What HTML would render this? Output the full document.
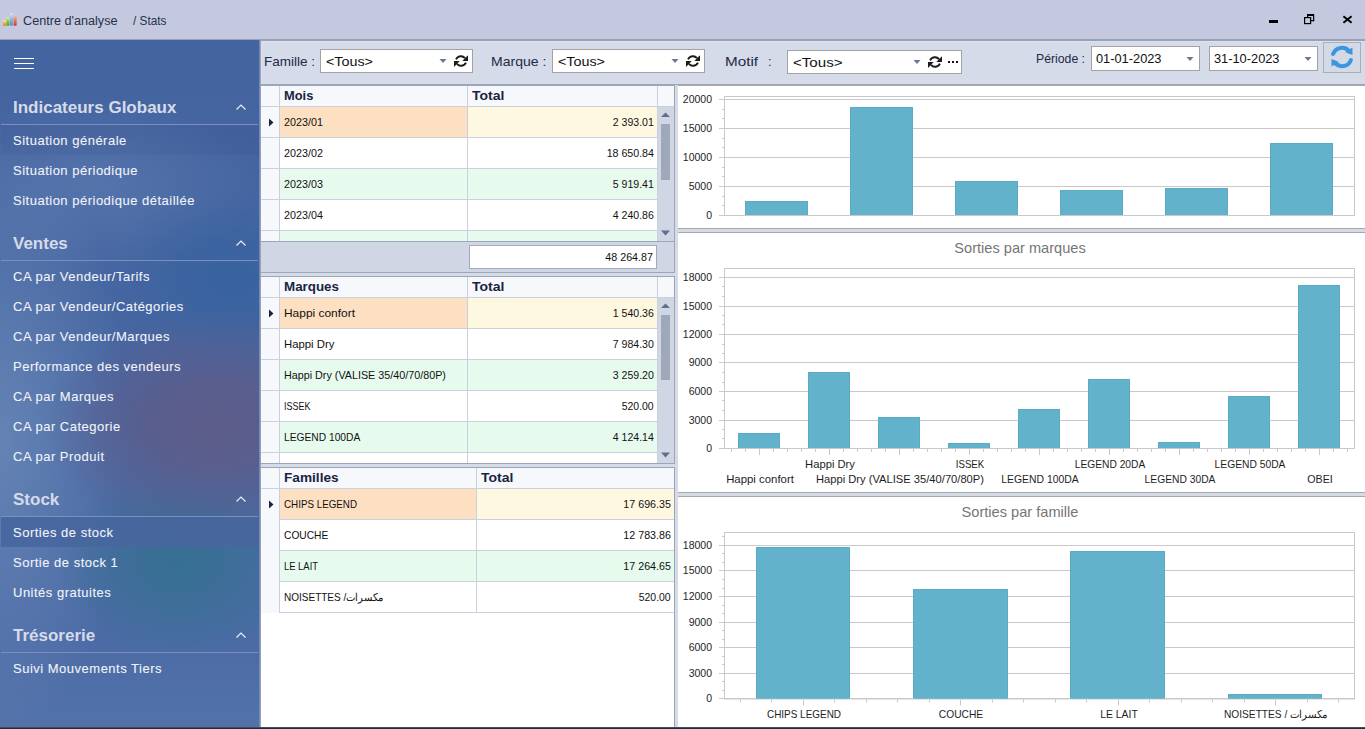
<!DOCTYPE html><html><head><meta charset="utf-8"><style>
html,body{margin:0;padding:0;width:1365px;height:729px;overflow:hidden;background:#fff;font-family:"Liberation Sans",sans-serif;position:relative;}
.t{position:absolute;white-space:pre;line-height:1;}
</style></head><body>
<div style="position:absolute;left:0px;top:0px;width:1365px;height:39px;background:#c4c9df"></div>
<div style="position:absolute;left:0px;top:39px;width:1365px;height:1px;background:#97a3b4"></div>
<div style="position:absolute;left:260px;top:40px;width:1105px;height:1px;background:#97a3b4"></div>
<svg style="position:absolute;left:0;top:0" width="20" height="30">
<defs>
<linearGradient id="go" x1="0" y1="0" x2="0" y2="1"><stop offset="0" stop-color="#fde9a8"/><stop offset="0.5" stop-color="#f4b04a"/><stop offset="1" stop-color="#e07a1e"/></linearGradient>
<linearGradient id="gg" x1="0" y1="0" x2="0" y2="1"><stop offset="0" stop-color="#d8f59a"/><stop offset="0.5" stop-color="#90c23a"/><stop offset="1" stop-color="#5f9a1e"/></linearGradient>
<linearGradient id="gb" x1="0" y1="0" x2="0" y2="1"><stop offset="0" stop-color="#cdeefc"/><stop offset="0.4" stop-color="#8cc2ee"/><stop offset="1" stop-color="#4f8fdc"/></linearGradient>
<linearGradient id="gr" x1="0" y1="0" x2="0" y2="1"><stop offset="0" stop-color="#fcc0b0"/><stop offset="0.45" stop-color="#ec7a60"/><stop offset="1" stop-color="#c83a26"/></linearGradient>
</defs>
<rect x="3" y="20.3" width="3" height="5.5" rx="0.8" fill="url(#go)"/>
<rect x="6.4" y="17.3" width="3.1" height="8.5" rx="0.8" fill="url(#gg)"/>
<rect x="10" y="13" width="3" height="12.8" rx="0.8" fill="url(#gb)"/>
<rect x="13.6" y="15.3" width="3.1" height="10.5" rx="0.8" fill="url(#gr)"/>
</svg>
<div class="t" style="left:23px;top:15.42px;font-size:12.5px;color:#27324a;font-weight:400;transform-origin:0 0;transform:scaleX(1.0115);">Centre d'analyse</div>
<div class="t" style="left:133px;top:15.42px;font-size:12.5px;color:#27324a;font-weight:400;transform-origin:0 0;transform:scaleX(0.9453);">/ Stats</div>
<div style="position:absolute;left:1269px;top:20px;width:9px;height:3px;background:#000"></div>
<svg style="position:absolute;left:1300px;top:10px" width="20" height="18">
<rect x="7" y="4" width="7" height="2" fill="#000"/>
<rect x="13" y="4" width="1.2" height="7.2" fill="#000"/>
<rect x="11" y="10" width="3.2" height="1.2" fill="#000"/>
<rect x="7" y="4" width="1.2" height="3" fill="#000"/>
<rect x="4.6" y="7.6" width="6" height="6" fill="none" stroke="#000" stroke-width="1.2"/>
</svg>
<svg style="position:absolute;left:1340px;top:13px" width="14" height="14">
<path d="M3.4 3.2L11.6 9.8M11.6 3.2L3.4 9.8" stroke="#000" stroke-width="1.9"/>
</svg>
<div style="position:absolute;left:0px;top:40px;width:259px;height:689px;background:radial-gradient(ellipse 170px 115px at 215px 385px, rgba(94,92,136,1), rgba(94,92,136,0.75) 40%, rgba(94,92,136,0) 100%),radial-gradient(ellipse 125px 95px at 180px 525px, rgba(54,112,145,1), rgba(54,112,145,0.6) 45%, rgba(54,112,145,0) 100%),radial-gradient(ellipse 120px 90px at 230px 240px, rgba(52,98,158,0.85), rgba(52,98,158,0) 100%),radial-gradient(ellipse 130px 300px at 0px 400px, rgba(104,134,182,0.9), rgba(104,134,182,0) 100%),radial-gradient(ellipse 170px 90px at 90px 145px, rgba(92,122,176,0.7), rgba(92,122,176,0) 100%),linear-gradient(#4464a0 0px, #4666a2 300px, #4c6ba6 600px, #5272aa 689px)"></div>
<div style="position:absolute;left:259px;top:40px;width:1px;height:689px;background:#7089b8"></div>
<div style="position:absolute;left:260px;top:40px;width:1px;height:689px;background:#97a3b4"></div>
<div style="position:absolute;left:14px;top:58px;width:20px;height:1px;background:#fff"></div>
<div style="position:absolute;left:14px;top:63px;width:20px;height:1px;background:#fff"></div>
<div style="position:absolute;left:14px;top:68px;width:20px;height:1px;background:#fff"></div>
<div class="t" style="left:13px;top:98.61px;font-size:17px;color:#d6dbea;font-weight:700;transform-origin:0 0;">Indicateurs Globaux</div>
<svg style="position:absolute;left:234px;top:101px" width="14" height="10"><path d="M2.5 8.5L7 4L11.5 8.5" fill="none" stroke="#f0f2f8" stroke-width="1.1"/></svg>
<div style="position:absolute;left:1px;top:124px;width:257px;height:1px;background:#7a8fbb"></div>
<div style="position:absolute;left:1px;top:125px;width:258px;height:30px;background:rgba(40,60,110,0.09)"></div>
<div class="t" style="left:13px;top:134.00px;font-size:13px;color:#f2f4fa;font-weight:400;transform-origin:0 0;letter-spacing:0.5px;-webkit-text-stroke:0.08px #f2f4fa">Situation générale</div>
<div class="t" style="left:13px;top:164.00px;font-size:13px;color:#f2f4fa;font-weight:400;transform-origin:0 0;letter-spacing:0.5px;-webkit-text-stroke:0.08px #f2f4fa">Situation périodique</div>
<div class="t" style="left:13px;top:194.00px;font-size:13px;color:#f2f4fa;font-weight:400;transform-origin:0 0;letter-spacing:0.5px;-webkit-text-stroke:0.08px #f2f4fa">Situation périodique détaillée</div>
<div class="t" style="left:13px;top:234.61px;font-size:17px;color:#d6dbea;font-weight:700;transform-origin:0 0;">Ventes</div>
<svg style="position:absolute;left:234px;top:237px" width="14" height="10"><path d="M2.5 8.5L7 4L11.5 8.5" fill="none" stroke="#f0f2f8" stroke-width="1.1"/></svg>
<div style="position:absolute;left:1px;top:260px;width:257px;height:1px;background:#7a8fbb"></div>
<div class="t" style="left:13px;top:270.00px;font-size:13px;color:#f2f4fa;font-weight:400;transform-origin:0 0;letter-spacing:0.5px;-webkit-text-stroke:0.08px #f2f4fa">CA par Vendeur/Tarifs</div>
<div class="t" style="left:13px;top:300.00px;font-size:13px;color:#f2f4fa;font-weight:400;transform-origin:0 0;letter-spacing:0.5px;-webkit-text-stroke:0.08px #f2f4fa">CA par Vendeur/Catégories</div>
<div class="t" style="left:13px;top:330.00px;font-size:13px;color:#f2f4fa;font-weight:400;transform-origin:0 0;letter-spacing:0.5px;-webkit-text-stroke:0.08px #f2f4fa">CA par Vendeur/Marques</div>
<div class="t" style="left:13px;top:360.00px;font-size:13px;color:#f2f4fa;font-weight:400;transform-origin:0 0;letter-spacing:0.5px;-webkit-text-stroke:0.08px #f2f4fa">Performance des vendeurs</div>
<div class="t" style="left:13px;top:390.00px;font-size:13px;color:#f2f4fa;font-weight:400;transform-origin:0 0;letter-spacing:0.5px;-webkit-text-stroke:0.08px #f2f4fa">CA par Marques</div>
<div class="t" style="left:13px;top:420.00px;font-size:13px;color:#f2f4fa;font-weight:400;transform-origin:0 0;letter-spacing:0.5px;-webkit-text-stroke:0.08px #f2f4fa">CA par Categorie</div>
<div class="t" style="left:13px;top:450.00px;font-size:13px;color:#f2f4fa;font-weight:400;transform-origin:0 0;letter-spacing:0.5px;-webkit-text-stroke:0.08px #f2f4fa">CA par Produit</div>
<div class="t" style="left:13px;top:490.61px;font-size:17px;color:#d6dbea;font-weight:700;transform-origin:0 0;">Stock</div>
<svg style="position:absolute;left:234px;top:493px" width="14" height="10"><path d="M2.5 8.5L7 4L11.5 8.5" fill="none" stroke="#f0f2f8" stroke-width="1.1"/></svg>
<div style="position:absolute;left:1px;top:516px;width:257px;height:1px;background:#7a8fbb"></div>
<div style="position:absolute;left:1px;top:517px;width:258px;height:30px;background:rgba(72,102,158,0.92)"></div>
<div class="t" style="left:13px;top:526.00px;font-size:13px;color:#f2f4fa;font-weight:400;transform-origin:0 0;letter-spacing:0.5px;-webkit-text-stroke:0.08px #f2f4fa">Sorties de stock</div>
<div class="t" style="left:13px;top:556.00px;font-size:13px;color:#f2f4fa;font-weight:400;transform-origin:0 0;letter-spacing:0.5px;-webkit-text-stroke:0.08px #f2f4fa">Sortie de stock 1</div>
<div class="t" style="left:13px;top:586.00px;font-size:13px;color:#f2f4fa;font-weight:400;transform-origin:0 0;letter-spacing:0.5px;-webkit-text-stroke:0.08px #f2f4fa">Unités gratuites</div>
<div class="t" style="left:13px;top:626.61px;font-size:17px;color:#d6dbea;font-weight:700;transform-origin:0 0;">Trésorerie</div>
<svg style="position:absolute;left:234px;top:629px" width="14" height="10"><path d="M2.5 8.5L7 4L11.5 8.5" fill="none" stroke="#f0f2f8" stroke-width="1.1"/></svg>
<div style="position:absolute;left:1px;top:652px;width:257px;height:1px;background:#7a8fbb"></div>
<div class="t" style="left:13px;top:662.00px;font-size:13px;color:#f2f4fa;font-weight:400;transform-origin:0 0;letter-spacing:0.5px;-webkit-text-stroke:0.08px #f2f4fa">Suivi Mouvements Tiers</div>
<div style="position:absolute;left:261px;top:41px;width:1104px;height:43px;background:#d5dbe9"></div>
<div style="position:absolute;left:261px;top:41px;width:1104px;height:1px;background:#dde1ef"></div>
<div style="position:absolute;left:261px;top:41px;width:1px;height:43px;background:#dde1ef"></div>
<div style="position:absolute;left:261px;top:84px;width:1104px;height:2px;background:#9ba6b8"></div>
<div class="t" style="left:264px;top:55.00px;font-size:13px;color:#1f2a48;font-weight:400;transform-origin:0 0;transform:scaleX(1.0402);">Famille :</div>
<div style="position:absolute;left:320px;top:49px;width:153px;height:24px;background:#fff;border:1px solid #a3a3a3;box-sizing:border-box"></div>
<div class="t" style="left:326px;top:55.00px;font-size:13px;color:#111;font-weight:400;transform-origin:0 0;transform:scaleX(1.1018);">&lt;Tous&gt;</div>
<svg style="position:absolute;left:439px;top:59px" width="8" height="5"><path d="M0.5 0H7.5L4 4Z" fill="#6a7896"/></svg>
<svg style="position:absolute;left:454px;top:55px" width="14" height="12" viewBox="0 0 14 12">
<path d="M2.1 4.4A5.2 5.2 0 0 1 11.0 3.2" fill="none" stroke="#1b1b1b" stroke-width="1.9"/>
<path d="M14 0.2V5.9H8.3Z" fill="#1b1b1b"/>
<path d="M11.9 7.6A5.2 5.2 0 0 1 3.0 8.8" fill="none" stroke="#1b1b1b" stroke-width="1.9"/>
<path d="M0 6.1H5.7L0 11.9Z" fill="#1b1b1b"/>
</svg>
<div class="t" style="left:491px;top:55.00px;font-size:13px;color:#1f2a48;font-weight:400;transform-origin:0 0;transform:scaleX(1.0777);">Marque :</div>
<div style="position:absolute;left:552px;top:49px;width:153px;height:24px;background:#fff;border:1px solid #a3a3a3;box-sizing:border-box"></div>
<div class="t" style="left:558px;top:55.00px;font-size:13px;color:#111;font-weight:400;transform-origin:0 0;transform:scaleX(1.1018);">&lt;Tous&gt;</div>
<svg style="position:absolute;left:671px;top:59px" width="8" height="5"><path d="M0.5 0H7.5L4 4Z" fill="#6a7896"/></svg>
<svg style="position:absolute;left:686px;top:55px" width="14" height="12" viewBox="0 0 14 12">
<path d="M2.1 4.4A5.2 5.2 0 0 1 11.0 3.2" fill="none" stroke="#1b1b1b" stroke-width="1.9"/>
<path d="M14 0.2V5.9H8.3Z" fill="#1b1b1b"/>
<path d="M11.9 7.6A5.2 5.2 0 0 1 3.0 8.8" fill="none" stroke="#1b1b1b" stroke-width="1.9"/>
<path d="M0 6.1H5.7L0 11.9Z" fill="#1b1b1b"/>
</svg>
<div class="t" style="left:725px;top:55.00px;font-size:13px;color:#1f2a48;font-weight:400;transform-origin:0 0;transform:scaleX(1.1714);">Motif</div>
<div class="t" style="left:768px;top:55.00px;font-size:13px;color:#1f2a48;font-weight:400;transform-origin:0 0;">:</div>
<div style="position:absolute;left:787px;top:50px;width:175px;height:24px;background:#fff;border:1px solid #a3a3a3;box-sizing:border-box"></div>
<div class="t" style="left:793px;top:56.00px;font-size:13px;color:#111;font-weight:400;transform-origin:0 0;transform:scaleX(1.1604);">&lt;Tous&gt;</div>
<svg style="position:absolute;left:913px;top:60px" width="8" height="5"><path d="M0.5 0H7.5L4 4Z" fill="#6a7896"/></svg>
<svg style="position:absolute;left:928px;top:56px" width="14" height="12" viewBox="0 0 14 12">
<path d="M2.1 4.4A5.2 5.2 0 0 1 11.0 3.2" fill="none" stroke="#1b1b1b" stroke-width="1.9"/>
<path d="M14 0.2V5.9H8.3Z" fill="#1b1b1b"/>
<path d="M11.9 7.6A5.2 5.2 0 0 1 3.0 8.8" fill="none" stroke="#1b1b1b" stroke-width="1.9"/>
<path d="M0 6.1H5.7L0 11.9Z" fill="#1b1b1b"/>
</svg>
<div style="position:absolute;left:948px;top:61px;width:2px;height:2px;background:#111"></div>
<div style="position:absolute;left:952px;top:61px;width:2px;height:2px;background:#111"></div>
<div style="position:absolute;left:956px;top:61px;width:2px;height:2px;background:#111"></div>
<div class="t" style="left:1036px;top:53.42px;font-size:12.5px;color:#1f2a48;font-weight:400;transform-origin:0 0;transform:scaleX(0.9794);">Période :</div>
<div style="position:absolute;left:1091px;top:46px;width:109px;height:25px;background:#fff;border:1px solid #a3a3a3;box-sizing:border-box"></div>
<div class="t" style="left:1096px;top:53.42px;font-size:12.5px;color:#111;font-weight:400;transform-origin:0 0;transform:scaleX(1.0242);">01-01-2023</div>
<svg style="position:absolute;left:1186px;top:57px" width="8" height="5"><path d="M0.5 0H7.5L4 4Z" fill="#6a7896"/></svg>
<div style="position:absolute;left:1209px;top:46px;width:109px;height:25px;background:#fff;border:1px solid #a3a3a3;box-sizing:border-box"></div>
<div class="t" style="left:1214px;top:53.42px;font-size:12.5px;color:#111;font-weight:400;transform-origin:0 0;transform:scaleX(1.0242);">31-10-2023</div>
<svg style="position:absolute;left:1304px;top:57px" width="8" height="5"><path d="M0.5 0H7.5L4 4Z" fill="#6a7896"/></svg>
<div style="position:absolute;left:1323px;top:42px;width:38px;height:31px;background:#d4d9e6;border:1px solid #a9aebb;box-sizing:border-box"></div>
<svg style="position:absolute;left:1329.5px;top:45.4px" width="24" height="24" viewBox="-12 -12 24 24">
<path d="M-8.9 -3.1A9.5 9.5 0 0 1 7.4 -5.6" fill="none" stroke="#3b96de" stroke-width="4" stroke-linecap="round"/>
<path d="M10.5 -9.6V-2.0L3.0 -5.0Z" fill="#3b96de"/>
<path d="M8.9 3.1A9.5 9.5 0 0 1 -7.4 5.6" fill="none" stroke="#3b96de" stroke-width="4" stroke-linecap="round"/>
<path d="M-10.5 9.6V2.0L-3.0 5.0Z" fill="#3b96de"/>
</svg>
<div style="position:absolute;left:261px;top:86px;width:413px;height:643px;background:#d6dbe8"></div>
<div style="position:absolute;left:674px;top:85px;width:1px;height:642px;background:#9ba6b8"></div>
<div style="position:absolute;left:675px;top:85px;width:3px;height:642px;background:#d6dbe8"></div>
<div style="position:absolute;left:261px;top:85px;width:413px;height:1px;background:#9ba6b8"></div>
<div style="position:absolute;left:261px;top:86px;width:413px;height:155px;background:#fff"></div>
<div style="position:absolute;left:261px;top:86px;width:413px;height:20px;background:#f6f8fc"></div>
<div style="position:absolute;left:261px;top:106px;width:413px;height:1px;background:#cbd0de"></div>
<div class="t" style="left:284px;top:89.00px;font-size:13px;color:#1a2442;font-weight:700;transform-origin:0 0;transform:scaleX(0.9890);">Mois</div>
<div class="t" style="left:472px;top:89.00px;font-size:13px;color:#1a2442;font-weight:700;transform-origin:0 0;transform:scaleX(1.0766);">Total</div>
<div style="position:absolute;left:467px;top:86px;width:1px;height:20px;background:#cbd0de"></div>
<div style="position:absolute;left:467px;top:86px;width:1px;height:20px;background:#cbd0de"></div>
<div style="position:absolute;left:261px;top:107px;width:18px;height:134px;background:#f6f8fc"></div>
<div style="position:absolute;left:280px;top:107px;width:187px;height:30px;background:#fde0c1"></div>
<div style="position:absolute;left:468px;top:107px;width:189px;height:30px;background:#fff8e1"></div>
<div style="position:absolute;left:261px;top:137px;width:396px;height:1px;background:#cbd0de"></div>
<div class="t" style="left:284px;top:116.69px;font-size:11px;color:#111;font-weight:400;transform-origin:0 0;transform:scaleX(0.9782);">2023/01</div>
<div class="t" style="right:711px;top:116.69px;font-size:11px;color:#111;font-weight:400;text-align:right;transform-origin:100% 0;transform:scaleX(0.9596);">2 393.01</div>
<div style="position:absolute;left:261px;top:168px;width:396px;height:1px;background:#cbd0de"></div>
<div class="t" style="left:284px;top:147.69px;font-size:11px;color:#111;font-weight:400;transform-origin:0 0;transform:scaleX(0.9782);">2023/02</div>
<div class="t" style="right:711px;top:147.69px;font-size:11px;color:#111;font-weight:400;text-align:right;transform-origin:100% 0;transform:scaleX(0.9665);">18 650.84</div>
<div style="position:absolute;left:280px;top:169px;width:377px;height:30px;background:#e6fbee"></div>
<div style="position:absolute;left:261px;top:199px;width:396px;height:1px;background:#cbd0de"></div>
<div class="t" style="left:284px;top:178.69px;font-size:11px;color:#111;font-weight:400;transform-origin:0 0;transform:scaleX(0.9782);">2023/03</div>
<div class="t" style="right:711px;top:178.69px;font-size:11px;color:#111;font-weight:400;text-align:right;transform-origin:100% 0;transform:scaleX(0.9596);">5 919.41</div>
<div style="position:absolute;left:261px;top:230px;width:396px;height:1px;background:#cbd0de"></div>
<div class="t" style="left:284px;top:209.69px;font-size:11px;color:#111;font-weight:400;transform-origin:0 0;transform:scaleX(0.9782);">2023/04</div>
<div class="t" style="right:711px;top:209.69px;font-size:11px;color:#111;font-weight:400;text-align:right;transform-origin:100% 0;transform:scaleX(0.9596);">4 240.86</div>
<div style="position:absolute;left:280px;top:231px;width:377px;height:10px;background:#e6fbee"></div>
<div style="position:absolute;left:279px;top:86px;width:1px;height:155px;background:#cbd0de"></div>
<div style="position:absolute;left:467px;top:107px;width:1px;height:134px;background:#cbd0de"></div>
<div style="position:absolute;left:657px;top:86px;width:1px;height:155px;background:#cbd0de"></div>
<div style="position:absolute;left:658px;top:107px;width:16px;height:134px;background:#d0d6e4"></div>
<svg style="position:absolute;left:658px;top:107px" width="16" height="134"><path d="M3 10H12L7.5 5.5Z" fill="#5f6f8e"/><rect x="3" y="17" width="9" height="56" fill="#9ea8b9"/><path d="M3 123.5H12L7.5 128.5Z" fill="#5f6f8e"/></svg>
<svg style="position:absolute;left:268px;top:118px" width="7" height="9"><path d="M1 0.5L5.5 4.5L1 8.5Z" fill="#1a2442"/></svg>
<div style="position:absolute;left:261px;top:241px;width:413px;height:1px;background:#9ba6b8"></div>
<div style="position:absolute;left:261px;top:242px;width:413px;height:30px;background:#d0d6e4"></div>
<div style="position:absolute;left:261px;top:272px;width:413px;height:1px;background:#9ba6b8"></div>
<div style="position:absolute;left:469px;top:245px;width:188px;height:24px;background:#fff;border:1px solid #a2abbb;box-sizing:border-box"></div>
<div class="t" style="right:712px;top:251.69px;font-size:11px;color:#111;font-weight:400;text-align:right;transform-origin:100% 0;transform:scaleX(0.9727);">48 264.87</div>
<div style="position:absolute;left:261px;top:276px;width:413px;height:1px;background:#9ba6b8"></div>
<div style="position:absolute;left:261px;top:277px;width:413px;height:186px;background:#fff"></div>
<div style="position:absolute;left:261px;top:277px;width:413px;height:20px;background:#f6f8fc"></div>
<div style="position:absolute;left:261px;top:297px;width:413px;height:1px;background:#cbd0de"></div>
<div class="t" style="left:284px;top:280.00px;font-size:13px;color:#1a2442;font-weight:700;transform-origin:0 0;transform:scaleX(1.0286);">Marques</div>
<div class="t" style="left:472px;top:280.00px;font-size:13px;color:#1a2442;font-weight:700;transform-origin:0 0;transform:scaleX(1.0766);">Total</div>
<div style="position:absolute;left:467px;top:277px;width:1px;height:20px;background:#cbd0de"></div>
<div style="position:absolute;left:467px;top:277px;width:1px;height:20px;background:#cbd0de"></div>
<div style="position:absolute;left:261px;top:298px;width:18px;height:165px;background:#f6f8fc"></div>
<div style="position:absolute;left:280px;top:298px;width:187px;height:30px;background:#fde0c1"></div>
<div style="position:absolute;left:468px;top:298px;width:189px;height:30px;background:#fff8e1"></div>
<div style="position:absolute;left:261px;top:328px;width:396px;height:1px;background:#cbd0de"></div>
<div class="t" style="left:284px;top:307.69px;font-size:11px;color:#111;font-weight:400;transform-origin:0 0;transform:scaleX(1.0850);">Happi confort</div>
<div class="t" style="right:711px;top:307.69px;font-size:11px;color:#111;font-weight:400;text-align:right;transform-origin:100% 0;transform:scaleX(0.9596);">1 540.36</div>
<div style="position:absolute;left:261px;top:359px;width:396px;height:1px;background:#cbd0de"></div>
<div class="t" style="left:284px;top:338.69px;font-size:11px;color:#111;font-weight:400;transform-origin:0 0;transform:scaleX(1.0305);">Happi Dry</div>
<div class="t" style="right:711px;top:338.69px;font-size:11px;color:#111;font-weight:400;text-align:right;transform-origin:100% 0;transform:scaleX(0.9596);">7 984.30</div>
<div style="position:absolute;left:280px;top:360px;width:377px;height:30px;background:#e6fbee"></div>
<div style="position:absolute;left:261px;top:390px;width:396px;height:1px;background:#cbd0de"></div>
<div class="t" style="left:284px;top:369.69px;font-size:11px;color:#111;font-weight:400;transform-origin:0 0;transform:scaleX(0.9782);">Happi Dry (VALISE 35/40/70/80P)</div>
<div class="t" style="right:711px;top:369.69px;font-size:11px;color:#111;font-weight:400;text-align:right;transform-origin:100% 0;transform:scaleX(0.9596);">3 259.20</div>
<div style="position:absolute;left:261px;top:421px;width:396px;height:1px;background:#cbd0de"></div>
<div class="t" style="left:284px;top:400.69px;font-size:11px;color:#111;font-weight:400;transform-origin:0 0;transform:scaleX(0.8177);">ISSEK</div>
<div class="t" style="right:711px;top:400.69px;font-size:11px;color:#111;font-weight:400;text-align:right;transform-origin:100% 0;transform:scaleX(0.9478);">520.00</div>
<div style="position:absolute;left:280px;top:422px;width:377px;height:30px;background:#e6fbee"></div>
<div style="position:absolute;left:261px;top:452px;width:396px;height:1px;background:#cbd0de"></div>
<div class="t" style="left:284px;top:431.69px;font-size:11px;color:#111;font-weight:400;transform-origin:0 0;transform:scaleX(0.9312);">LEGEND 100DA</div>
<div class="t" style="right:711px;top:431.69px;font-size:11px;color:#111;font-weight:400;text-align:right;transform-origin:100% 0;transform:scaleX(0.9596);">4 124.14</div>
<div style="position:absolute;left:279px;top:277px;width:1px;height:186px;background:#cbd0de"></div>
<div style="position:absolute;left:467px;top:298px;width:1px;height:165px;background:#cbd0de"></div>
<div style="position:absolute;left:657px;top:277px;width:1px;height:186px;background:#cbd0de"></div>
<div style="position:absolute;left:658px;top:298px;width:16px;height:165px;background:#d0d6e4"></div>
<svg style="position:absolute;left:658px;top:298px" width="16" height="165"><path d="M3 10H12L7.5 5.5Z" fill="#5f6f8e"/><rect x="3" y="17" width="9" height="65" fill="#9ea8b9"/><path d="M3 154.5H12L7.5 159.5Z" fill="#5f6f8e"/></svg>
<svg style="position:absolute;left:268px;top:309px" width="7" height="9"><path d="M1 0.5L5.5 4.5L1 8.5Z" fill="#1a2442"/></svg>
<div style="position:absolute;left:261px;top:463px;width:413px;height:1px;background:#9ba6b8"></div>
<div style="position:absolute;left:261px;top:467px;width:413px;height:1px;background:#9ba6b8"></div>
<div style="position:absolute;left:261px;top:468px;width:413px;height:259px;background:#fff"></div>
<div style="position:absolute;left:261px;top:468px;width:413px;height:20px;background:#f6f8fc"></div>
<div style="position:absolute;left:261px;top:488px;width:413px;height:1px;background:#cbd0de"></div>
<div class="t" style="left:284px;top:471.00px;font-size:13px;color:#1a2442;font-weight:700;transform-origin:0 0;transform:scaleX(1.0494);">Familles</div>
<div class="t" style="left:481px;top:471.00px;font-size:13px;color:#1a2442;font-weight:700;transform-origin:0 0;transform:scaleX(1.0766);">Total</div>
<div style="position:absolute;left:261px;top:489px;width:18px;height:124px;background:#f6f8fc"></div>
<div style="position:absolute;left:280px;top:489px;width:196px;height:30px;background:#fde0c1"></div>
<div style="position:absolute;left:477px;top:489px;width:197px;height:30px;background:#fff8e1"></div>
<div style="position:absolute;left:279px;top:519px;width:395px;height:1px;background:#cbd0de"></div>
<div class="t" style="left:284px;top:498.69px;font-size:11px;color:#111;font-weight:400;transform-origin:0 0;transform:scaleX(0.8911);">CHIPS LEGEND</div>
<div class="t" style="right:694px;top:498.69px;font-size:11px;color:#111;font-weight:400;text-align:right;transform-origin:100% 0;transform:scaleX(0.9727);">17 696.35</div>
<div style="position:absolute;left:279px;top:550px;width:395px;height:1px;background:#cbd0de"></div>
<div class="t" style="left:284px;top:529.69px;font-size:11px;color:#111;font-weight:400;transform-origin:0 0;transform:scaleX(0.9293);">COUCHE</div>
<div class="t" style="right:694px;top:529.69px;font-size:11px;color:#111;font-weight:400;text-align:right;transform-origin:100% 0;transform:scaleX(0.9727);">12 783.86</div>
<div style="position:absolute;left:280px;top:551px;width:394px;height:30px;background:#e6fbee"></div>
<div style="position:absolute;left:279px;top:581px;width:395px;height:1px;background:#cbd0de"></div>
<div class="t" style="left:284px;top:560.69px;font-size:11px;color:#111;font-weight:400;transform-origin:0 0;transform:scaleX(0.8553);">LE LAIT</div>
<div class="t" style="right:694px;top:560.69px;font-size:11px;color:#111;font-weight:400;text-align:right;transform-origin:100% 0;transform:scaleX(0.9727);">17 264.65</div>
<div style="position:absolute;left:279px;top:612px;width:395px;height:1px;background:#cbd0de"></div>
<div class="t" style="left:284px;top:591.69px;font-size:11px;color:#111;font-weight:400;transform-origin:0 0;transform:scaleX(0.9098);">NOISETTES /مكسرات</div>
<div class="t" style="right:694px;top:591.69px;font-size:11px;color:#111;font-weight:400;text-align:right;transform-origin:100% 0;transform:scaleX(0.9478);">520.00</div>
<div style="position:absolute;left:279px;top:468px;width:1px;height:145px;background:#cbd0de"></div>
<div style="position:absolute;left:476px;top:468px;width:1px;height:145px;background:#cbd0de"></div>
<svg style="position:absolute;left:268px;top:500px" width="7" height="9"><path d="M1 0.5L5.5 4.5L1 8.5Z" fill="#1a2442"/></svg>
<div style="position:absolute;left:674px;top:273px;width:1px;height:3px;background:#d6dbe8"></div>
<div style="position:absolute;left:674px;top:464px;width:1px;height:3px;background:#d6dbe8"></div>
<div style="position:absolute;left:0px;top:727px;width:1365px;height:1px;background:#3d4f5e"></div>
<div style="position:absolute;left:0px;top:728px;width:1365px;height:1px;background:#1c2e3a"></div>
<div style="position:absolute;left:678px;top:86px;width:687px;height:142px;background:#fff"></div>
<svg style="position:absolute;left:0;top:0" width="1365" height="729"><rect x="724.5" y="96.5" width="630" height="119" fill="none" stroke="#c9c9c9" stroke-width="1"/><rect x="719" y="215" width="636" height="1" fill="#c9c9c9"/><rect x="719" y="186" width="636" height="1" fill="#c9c9c9"/><rect x="719" y="157" width="636" height="1" fill="#c9c9c9"/><rect x="719" y="128" width="636" height="1" fill="#c9c9c9"/><rect x="719" y="99" width="636" height="1" fill="#c9c9c9"/><rect x="722" y="205" width="2" height="1" fill="#c9c9c9"/><rect x="722" y="196" width="2" height="1" fill="#c9c9c9"/><rect x="722" y="176" width="2" height="1" fill="#c9c9c9"/><rect x="722" y="167" width="2" height="1" fill="#c9c9c9"/><rect x="722" y="147" width="2" height="1" fill="#c9c9c9"/><rect x="722" y="138" width="2" height="1" fill="#c9c9c9"/><rect x="722" y="118" width="2" height="1" fill="#c9c9c9"/><rect x="722" y="109" width="2" height="1" fill="#c9c9c9"/><rect x="745" y="201" width="63" height="14" fill="#5aabc4"/><rect x="746" y="202" width="61" height="13" fill="#62b2cb"/><rect x="850" y="107" width="63" height="108" fill="#5aabc4"/><rect x="851" y="108" width="61" height="107" fill="#62b2cb"/><rect x="955" y="181" width="63" height="34" fill="#5aabc4"/><rect x="956" y="182" width="61" height="33" fill="#62b2cb"/><rect x="1060" y="190" width="63" height="25" fill="#5aabc4"/><rect x="1061" y="191" width="61" height="24" fill="#62b2cb"/><rect x="1165" y="188" width="63" height="27" fill="#5aabc4"/><rect x="1166" y="189" width="61" height="26" fill="#62b2cb"/><rect x="1270" y="143" width="63" height="72" fill="#5aabc4"/><rect x="1271" y="144" width="61" height="71" fill="#62b2cb"/></svg>
<div class="t" style="right:653px;top:210.11px;font-size:10.5px;color:#1e1e1e;font-weight:400;text-align:right;transform-origin:100% 0;">0</div>
<div class="t" style="right:653px;top:181.11px;font-size:10.5px;color:#1e1e1e;font-weight:400;text-align:right;transform-origin:100% 0;">5000</div>
<div class="t" style="right:653px;top:152.11px;font-size:10.5px;color:#1e1e1e;font-weight:400;text-align:right;transform-origin:100% 0;">10000</div>
<div class="t" style="right:653px;top:123.11px;font-size:10.5px;color:#1e1e1e;font-weight:400;text-align:right;transform-origin:100% 0;">15000</div>
<div class="t" style="right:653px;top:94.11px;font-size:10.5px;color:#1e1e1e;font-weight:400;text-align:right;transform-origin:100% 0;">20000</div>
<div style="position:absolute;left:678px;top:228px;width:687px;height:1px;background:#a9a9a9"></div>
<div style="position:absolute;left:678px;top:229px;width:687px;height:3px;background:#d6dbe8"></div>
<div style="position:absolute;left:678px;top:232px;width:687px;height:1px;background:#a9a9a9"></div>
<div style="position:absolute;left:678px;top:233px;width:687px;height:259px;background:#fff"></div>
<svg style="position:absolute;left:0;top:0" width="1365" height="729"><rect x="724.5" y="268.5" width="630" height="180" fill="none" stroke="#c9c9c9" stroke-width="1"/><rect x="719" y="448" width="636" height="1" fill="#c9c9c9"/><rect x="719" y="420" width="636" height="1" fill="#c9c9c9"/><rect x="719" y="391" width="636" height="1" fill="#c9c9c9"/><rect x="719" y="362" width="636" height="1" fill="#c9c9c9"/><rect x="719" y="334" width="636" height="1" fill="#c9c9c9"/><rect x="719" y="306" width="636" height="1" fill="#c9c9c9"/><rect x="719" y="277" width="636" height="1" fill="#c9c9c9"/><rect x="722" y="438" width="2" height="1" fill="#c9c9c9"/><rect x="722" y="429" width="2" height="1" fill="#c9c9c9"/><rect x="722" y="410" width="2" height="1" fill="#c9c9c9"/><rect x="722" y="400" width="2" height="1" fill="#c9c9c9"/><rect x="722" y="382" width="2" height="1" fill="#c9c9c9"/><rect x="722" y="372" width="2" height="1" fill="#c9c9c9"/><rect x="722" y="353" width="2" height="1" fill="#c9c9c9"/><rect x="722" y="344" width="2" height="1" fill="#c9c9c9"/><rect x="722" y="324" width="2" height="1" fill="#c9c9c9"/><rect x="722" y="315" width="2" height="1" fill="#c9c9c9"/><rect x="722" y="296" width="2" height="1" fill="#c9c9c9"/><rect x="722" y="286" width="2" height="1" fill="#c9c9c9"/><rect x="738" y="433" width="42" height="15" fill="#5aabc4"/><rect x="739" y="434" width="40" height="14" fill="#62b2cb"/><rect x="808" y="372" width="42" height="76" fill="#5aabc4"/><rect x="809" y="373" width="40" height="75" fill="#62b2cb"/><rect x="878" y="417" width="42" height="31" fill="#5aabc4"/><rect x="879" y="418" width="40" height="30" fill="#62b2cb"/><rect x="948" y="443" width="42" height="5" fill="#5aabc4"/><rect x="949" y="444" width="40" height="4" fill="#62b2cb"/><rect x="1018" y="409" width="42" height="39" fill="#5aabc4"/><rect x="1019" y="410" width="40" height="38" fill="#62b2cb"/><rect x="1088" y="379" width="42" height="69" fill="#5aabc4"/><rect x="1089" y="380" width="40" height="68" fill="#62b2cb"/><rect x="1158" y="442" width="42" height="6" fill="#5aabc4"/><rect x="1159" y="443" width="40" height="5" fill="#62b2cb"/><rect x="1228" y="396" width="42" height="52" fill="#5aabc4"/><rect x="1229" y="397" width="40" height="51" fill="#62b2cb"/><rect x="1298" y="285" width="42" height="163" fill="#5aabc4"/><rect x="1299" y="286" width="40" height="162" fill="#62b2cb"/><rect x="731" y="449" width="1" height="3" fill="#c9c9c9"/><rect x="745" y="449" width="1" height="3" fill="#c9c9c9"/><rect x="759" y="449" width="1" height="6" fill="#c9c9c9"/><rect x="773" y="449" width="1" height="3" fill="#c9c9c9"/><rect x="787" y="449" width="1" height="3" fill="#c9c9c9"/><rect x="801" y="449" width="1" height="3" fill="#c9c9c9"/><rect x="815" y="449" width="1" height="3" fill="#c9c9c9"/><rect x="829" y="449" width="1" height="6" fill="#c9c9c9"/><rect x="843" y="449" width="1" height="3" fill="#c9c9c9"/><rect x="857" y="449" width="1" height="3" fill="#c9c9c9"/><rect x="871" y="449" width="1" height="3" fill="#c9c9c9"/><rect x="885" y="449" width="1" height="3" fill="#c9c9c9"/><rect x="899" y="449" width="1" height="6" fill="#c9c9c9"/><rect x="913" y="449" width="1" height="3" fill="#c9c9c9"/><rect x="927" y="449" width="1" height="3" fill="#c9c9c9"/><rect x="941" y="449" width="1" height="3" fill="#c9c9c9"/><rect x="955" y="449" width="1" height="3" fill="#c9c9c9"/><rect x="969" y="449" width="1" height="6" fill="#c9c9c9"/><rect x="983" y="449" width="1" height="3" fill="#c9c9c9"/><rect x="997" y="449" width="1" height="3" fill="#c9c9c9"/><rect x="1011" y="449" width="1" height="3" fill="#c9c9c9"/><rect x="1025" y="449" width="1" height="3" fill="#c9c9c9"/><rect x="1039" y="449" width="1" height="6" fill="#c9c9c9"/><rect x="1053" y="449" width="1" height="3" fill="#c9c9c9"/><rect x="1067" y="449" width="1" height="3" fill="#c9c9c9"/><rect x="1081" y="449" width="1" height="3" fill="#c9c9c9"/><rect x="1095" y="449" width="1" height="3" fill="#c9c9c9"/><rect x="1109" y="449" width="1" height="6" fill="#c9c9c9"/><rect x="1123" y="449" width="1" height="3" fill="#c9c9c9"/><rect x="1137" y="449" width="1" height="3" fill="#c9c9c9"/><rect x="1151" y="449" width="1" height="3" fill="#c9c9c9"/><rect x="1165" y="449" width="1" height="3" fill="#c9c9c9"/><rect x="1179" y="449" width="1" height="6" fill="#c9c9c9"/><rect x="1193" y="449" width="1" height="3" fill="#c9c9c9"/><rect x="1207" y="449" width="1" height="3" fill="#c9c9c9"/><rect x="1221" y="449" width="1" height="3" fill="#c9c9c9"/><rect x="1235" y="449" width="1" height="3" fill="#c9c9c9"/><rect x="1249" y="449" width="1" height="6" fill="#c9c9c9"/><rect x="1263" y="449" width="1" height="3" fill="#c9c9c9"/><rect x="1277" y="449" width="1" height="3" fill="#c9c9c9"/><rect x="1291" y="449" width="1" height="3" fill="#c9c9c9"/><rect x="1305" y="449" width="1" height="3" fill="#c9c9c9"/><rect x="1319" y="449" width="1" height="6" fill="#c9c9c9"/><rect x="1333" y="449" width="1" height="3" fill="#c9c9c9"/><rect x="1347" y="449" width="1" height="3" fill="#c9c9c9"/></svg>
<div class="t" style="right:653px;top:443.11px;font-size:10.5px;color:#1e1e1e;font-weight:400;text-align:right;transform-origin:100% 0;">0</div>
<div class="t" style="right:653px;top:415.11px;font-size:10.5px;color:#1e1e1e;font-weight:400;text-align:right;transform-origin:100% 0;">3000</div>
<div class="t" style="right:653px;top:386.11px;font-size:10.5px;color:#1e1e1e;font-weight:400;text-align:right;transform-origin:100% 0;">6000</div>
<div class="t" style="right:653px;top:357.11px;font-size:10.5px;color:#1e1e1e;font-weight:400;text-align:right;transform-origin:100% 0;">9000</div>
<div class="t" style="right:653px;top:329.11px;font-size:10.5px;color:#1e1e1e;font-weight:400;text-align:right;transform-origin:100% 0;">12000</div>
<div class="t" style="right:653px;top:301.11px;font-size:10.5px;color:#1e1e1e;font-weight:400;text-align:right;transform-origin:100% 0;">15000</div>
<div class="t" style="right:653px;top:272.11px;font-size:10.5px;color:#1e1e1e;font-weight:400;text-align:right;transform-origin:100% 0;">18000</div>
<div class="t" style="left:820px;width:400px;top:240.64px;font-size:14.6px;color:#767676;font-weight:400;text-align:center;transform-origin:50% 0;">Sorties par marques</div>
<div class="t" style="left:560.0px;width:400px;top:473.69px;font-size:11px;color:#1e1e1e;font-weight:400;text-align:center;transform-origin:50% 0;transform:scaleX(1.0346);">Happi confort</div>
<div class="t" style="left:630.0px;width:400px;top:458.69px;font-size:11px;color:#1e1e1e;font-weight:400;text-align:center;transform-origin:50% 0;transform:scaleX(1.0203);">Happi Dry</div>
<div class="t" style="left:700.0px;width:400px;top:473.69px;font-size:11px;color:#1e1e1e;font-weight:400;text-align:center;transform-origin:50% 0;transform:scaleX(1.0151);">Happi Dry (VALISE 35/40/70/80P)</div>
<div class="t" style="left:770.0px;width:400px;top:458.69px;font-size:11px;color:#1e1e1e;font-weight:400;text-align:center;transform-origin:50% 0;transform:scaleX(0.8795);">ISSEK</div>
<div class="t" style="left:840.0px;width:400px;top:473.69px;font-size:11px;color:#1e1e1e;font-weight:400;text-align:center;transform-origin:50% 0;transform:scaleX(0.9446);">LEGEND 100DA</div>
<div class="t" style="left:910.0px;width:400px;top:458.69px;font-size:11px;color:#1e1e1e;font-weight:400;text-align:center;transform-origin:50% 0;transform:scaleX(0.9299);">LEGEND 20DA</div>
<div class="t" style="left:980.0px;width:400px;top:473.69px;font-size:11px;color:#1e1e1e;font-weight:400;text-align:center;transform-origin:50% 0;transform:scaleX(0.9339);">LEGEND 30DA</div>
<div class="t" style="left:1050.0px;width:400px;top:458.69px;font-size:11px;color:#1e1e1e;font-weight:400;text-align:center;transform-origin:50% 0;transform:scaleX(0.9339);">LEGEND 50DA</div>
<div class="t" style="left:1120.0px;width:400px;top:473.69px;font-size:11px;color:#1e1e1e;font-weight:400;text-align:center;transform-origin:50% 0;transform:scaleX(0.9697);">OBEI</div>
<div style="position:absolute;left:678px;top:492px;width:687px;height:1px;background:#a9a9a9"></div>
<div style="position:absolute;left:678px;top:493px;width:687px;height:3px;background:#d6dbe8"></div>
<div style="position:absolute;left:678px;top:496px;width:687px;height:1px;background:#a9a9a9"></div>
<div style="position:absolute;left:678px;top:497px;width:687px;height:230px;background:#fff"></div>
<svg style="position:absolute;left:0;top:0" width="1365" height="729"><rect x="724.5" y="532.5" width="630" height="166.5" fill="none" stroke="#c9c9c9" stroke-width="1"/><rect x="719" y="698" width="636" height="1" fill="#c9c9c9"/><rect x="719" y="673" width="636" height="1" fill="#c9c9c9"/><rect x="719" y="647" width="636" height="1" fill="#c9c9c9"/><rect x="719" y="622" width="636" height="1" fill="#c9c9c9"/><rect x="719" y="596" width="636" height="1" fill="#c9c9c9"/><rect x="719" y="570" width="636" height="1" fill="#c9c9c9"/><rect x="719" y="545" width="636" height="1" fill="#c9c9c9"/><rect x="722" y="690" width="2" height="1" fill="#c9c9c9"/><rect x="722" y="681" width="2" height="1" fill="#c9c9c9"/><rect x="722" y="664" width="2" height="1" fill="#c9c9c9"/><rect x="722" y="656" width="2" height="1" fill="#c9c9c9"/><rect x="722" y="639" width="2" height="1" fill="#c9c9c9"/><rect x="722" y="630" width="2" height="1" fill="#c9c9c9"/><rect x="722" y="613" width="2" height="1" fill="#c9c9c9"/><rect x="722" y="605" width="2" height="1" fill="#c9c9c9"/><rect x="722" y="588" width="2" height="1" fill="#c9c9c9"/><rect x="722" y="579" width="2" height="1" fill="#c9c9c9"/><rect x="722" y="562" width="2" height="1" fill="#c9c9c9"/><rect x="722" y="553" width="2" height="1" fill="#c9c9c9"/><rect x="722" y="536" width="2" height="1" fill="#c9c9c9"/><rect x="756" y="547" width="94" height="151.5" fill="#5aabc4"/><rect x="757" y="548" width="92" height="150.5" fill="#62b2cb"/><rect x="913" y="589" width="95" height="109.5" fill="#5aabc4"/><rect x="914" y="590" width="93" height="108.5" fill="#62b2cb"/><rect x="1070" y="551" width="95" height="147.5" fill="#5aabc4"/><rect x="1071" y="552" width="93" height="146.5" fill="#62b2cb"/><rect x="1228" y="694" width="94" height="4.5" fill="#5aabc4"/><rect x="1229" y="695" width="92" height="3.5" fill="#62b2cb"/><rect x="740" y="699.5" width="1" height="3" fill="#c9c9c9"/><rect x="771" y="699.5" width="1" height="3" fill="#c9c9c9"/><rect x="803" y="699.5" width="1" height="6" fill="#c9c9c9"/><rect x="834" y="699.5" width="1" height="3" fill="#c9c9c9"/><rect x="866" y="699.5" width="1" height="3" fill="#c9c9c9"/><rect x="897" y="699.5" width="1" height="3" fill="#c9c9c9"/><rect x="929" y="699.5" width="1" height="3" fill="#c9c9c9"/><rect x="960" y="699.5" width="1" height="6" fill="#c9c9c9"/><rect x="992" y="699.5" width="1" height="3" fill="#c9c9c9"/><rect x="1023" y="699.5" width="1" height="3" fill="#c9c9c9"/><rect x="1055" y="699.5" width="1" height="3" fill="#c9c9c9"/><rect x="1086" y="699.5" width="1" height="3" fill="#c9c9c9"/><rect x="1118" y="699.5" width="1" height="6" fill="#c9c9c9"/><rect x="1149" y="699.5" width="1" height="3" fill="#c9c9c9"/><rect x="1181" y="699.5" width="1" height="3" fill="#c9c9c9"/><rect x="1212" y="699.5" width="1" height="3" fill="#c9c9c9"/><rect x="1244" y="699.5" width="1" height="3" fill="#c9c9c9"/><rect x="1275" y="699.5" width="1" height="6" fill="#c9c9c9"/><rect x="1307" y="699.5" width="1" height="3" fill="#c9c9c9"/><rect x="1338" y="699.5" width="1" height="3" fill="#c9c9c9"/></svg>
<div class="t" style="right:653px;top:693.11px;font-size:10.5px;color:#1e1e1e;font-weight:400;text-align:right;transform-origin:100% 0;">0</div>
<div class="t" style="right:653px;top:668.11px;font-size:10.5px;color:#1e1e1e;font-weight:400;text-align:right;transform-origin:100% 0;">3000</div>
<div class="t" style="right:653px;top:642.11px;font-size:10.5px;color:#1e1e1e;font-weight:400;text-align:right;transform-origin:100% 0;">6000</div>
<div class="t" style="right:653px;top:617.11px;font-size:10.5px;color:#1e1e1e;font-weight:400;text-align:right;transform-origin:100% 0;">9000</div>
<div class="t" style="right:653px;top:591.11px;font-size:10.5px;color:#1e1e1e;font-weight:400;text-align:right;transform-origin:100% 0;">12000</div>
<div class="t" style="right:653px;top:565.11px;font-size:10.5px;color:#1e1e1e;font-weight:400;text-align:right;transform-origin:100% 0;">15000</div>
<div class="t" style="right:653px;top:540.11px;font-size:10.5px;color:#1e1e1e;font-weight:400;text-align:right;transform-origin:100% 0;">18000</div>
<div class="t" style="left:820px;width:400px;top:504.64px;font-size:14.6px;color:#767676;font-weight:400;text-align:center;transform-origin:50% 0;">Sorties par famille</div>
<div class="t" style="left:603.75px;width:400px;top:708.69px;font-size:11px;color:#1e1e1e;font-weight:400;text-align:center;transform-origin:50% 0;transform:scaleX(0.9033);">CHIPS LEGEND</div>
<div class="t" style="left:761.25px;width:400px;top:708.69px;font-size:11px;color:#1e1e1e;font-weight:400;text-align:center;transform-origin:50% 0;transform:scaleX(0.9293);">COUCHE</div>
<div class="t" style="left:918.75px;width:400px;top:708.69px;font-size:11px;color:#1e1e1e;font-weight:400;text-align:center;transform-origin:50% 0;transform:scaleX(0.9484);">LE LAIT</div>
<div class="t" style="left:1076.25px;width:400px;top:708.69px;font-size:11px;color:#1e1e1e;font-weight:400;text-align:center;transform-origin:50% 0;transform:scaleX(0.9243);">NOISETTES / مكسرات</div>
<div style="position:absolute;left:678px;top:85px;width:687px;height:1px;background:#a9a9a9"></div>
</body></html>
